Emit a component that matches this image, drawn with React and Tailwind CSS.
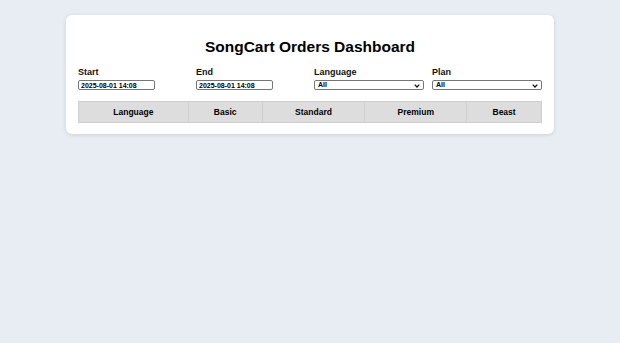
import React from 'react';

const FONT = { fontFamily: '"Liberation Sans", Arial, sans-serif' };

const COLUMNS = [
  { label: 'Language', w: 'w-[110px]' },
  { label: 'Basic', w: 'w-[74px]' },
  { label: 'Standard', w: 'w-[103px]' },
  { label: 'Premium', w: 'w-[102px]' },
  { label: 'Beast', w: 'w-[75px]' },
];

const Chevron = () => (
  <svg width="6" height="4" viewBox="0 0 6 4" className="absolute right-[3px] top-[3px]">
    <path d="M0.7 0.6 L3 3 L5.3 0.6" fill="none" stroke="#111" strokeWidth="1.3" />
  </svg>
);

const Field = ({ label, children }) => (
  <div className="flex flex-col">
    <label className="text-[9px] leading-[10px] font-semibold text-[#111] mb-[3px]">{label}</label>
    {children}
  </div>
);

const DateInput = () => (
  <input
    type="text"
    readOnly
    value="2025-08-01 14:08"
    className="w-[77px] h-[10px] border border-[#767676] rounded-[2px] px-[2px] text-[7px] leading-[8px] font-semibold text-black bg-white outline-none"
    style={FONT}
  />
);

const SelectBox = () => (
  <div className="relative w-full h-[10px] border border-[#767676] rounded-[2px] bg-white">
    <span className="absolute left-[3px] top-0 text-[7px] leading-[8px] font-semibold text-black">All</span>
    <Chevron />
  </div>
);

export default function App() {
  return (
    <div className="min-h-screen bg-[#e8ecf3] pt-[15px]" style={FONT}>
      <div className="mx-auto w-[488px] bg-white rounded-[6px] shadow-[0_1px_4px_rgba(0,0,0,0.12)] px-[12px] pt-[23px] pb-[11px]">
        <h1 className="text-center text-[15.5px] leading-[18px] font-bold text-black mb-[11px]">
          SongCart Orders Dashboard
        </h1>
        <div className="grid grid-cols-4 gap-x-[8px] mb-[11px]">
          <Field label="Start"><DateInput /></Field>
          <Field label="End"><DateInput /></Field>
          <Field label="Language"><SelectBox /></Field>
          <Field label="Plan"><SelectBox /></Field>
        </div>
        <table className="w-full border-collapse">
          <thead>
            <tr>
              {COLUMNS.map((c) => (
                <th
                  key={c.label}
                  className={`${c.w} h-[21px] bg-[#dddddd] border border-[#cfcfcf] text-[8.5px] font-bold text-black text-center p-0`}
                >
                  {c.label}
                </th>
              ))}
            </tr>
          </thead>
        </table>
      </div>
    </div>
  );
}
